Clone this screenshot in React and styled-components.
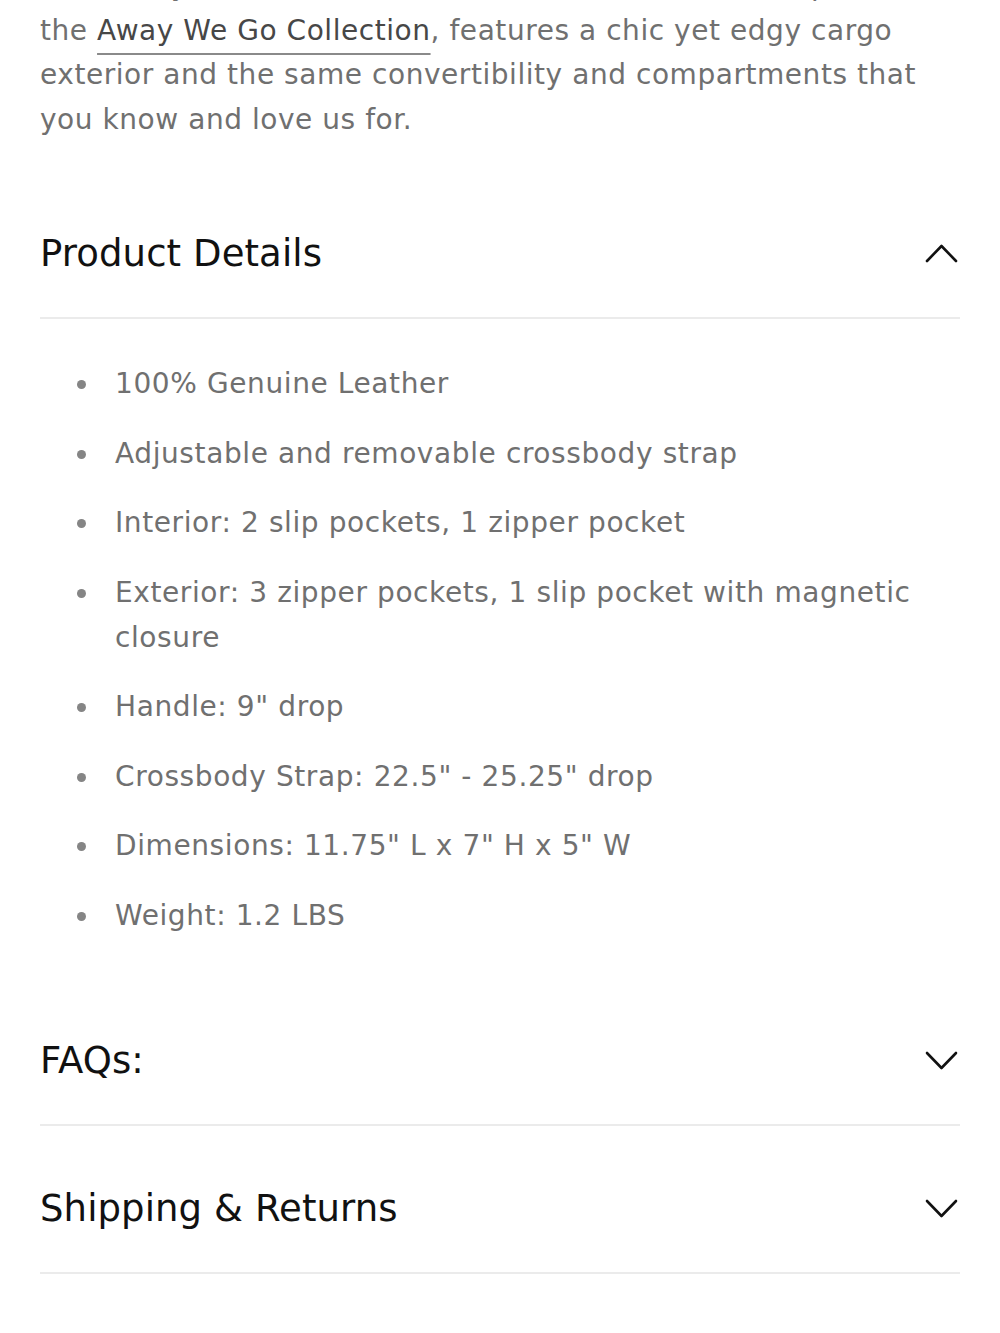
import React from "react";
import styled, { createGlobalStyle } from "styled-components";

const Global = createGlobalStyle`
  html, body { margin: 0; padding: 0; background: #fff; }
  body { font-family: "DejaVu Sans", "Liberation Sans", sans-serif; -webkit-font-smoothing: antialiased; }
`;

const Page = styled.div`
  padding: 0 40px;
  overflow: hidden;
`;

const Intro = styled.p`
  margin: -36px 0 0;
  font-size: 28px;
  font-weight: 400;
  line-height: 44.5px;
  letter-spacing: 0.55px;
  color: #707070;
  white-space: nowrap;
`;

const Link = styled.a`
  color: #474747;
  text-decoration: underline;
  text-decoration-color: #8a8a8a;
  text-decoration-thickness: 2px;
  text-underline-offset: 13px;
`;

const Item = styled.section`
  border-bottom: 2px solid #ebebeb;
  margin-top: ${(p) => p.$top || 0}px;
`;

const Header = styled.div`
  display: flex;
  align-items: center;
  justify-content: space-between;
  padding: 59px 2px 39px 0;
`;

const Title = styled.h2`
  margin: 0;
  font-size: 37px;
  font-weight: 400;
  line-height: 48px;
  letter-spacing: 0.1px;
  color: #111;
`;

const Chevron = styled.svg`
  display: block;
  margin-top: ${(p) => (p.$up ? -2 : 0)}px;
`;

const Panel = styled.div`
  padding: 42px 0 40px;
`;

const List = styled.ul`
  margin: 0;
  padding: 0 0 0 37px;
  list-style: none;
  display: flex;
  flex-direction: column;
  gap: 24.5px;
`;

const Bullet = styled.li`
  display: flex;
  align-items: flex-start;
  font-size: 28px;
  line-height: 45px;
  letter-spacing: 0.6px;
  color: #707070;
  padding-right: 40px;
  &::before {
    content: "";
    flex: 0 0 9px;
    height: 9px;
    margin: 19px 29px 0 0;
    border-radius: 50%;
    background: #858585;
  }
`;

const Toggle = ({ up }) => (
  <Chevron $up={up} width="33" height="20" viewBox="0 0 33 20" fill="none">
    <path
      d={up ? "M2 18 L16.5 3 L31 18" : "M2 2 L16.5 17 L31 2"}
      stroke="#111"
      strokeWidth="2.6"
      strokeLinecap="round"
      strokeLinejoin="round"
    />
  </Chevron>
);

const details = [
  "100% Genuine Leather",
  "Adjustable and removable crossbody strap",
  "Interior: 2 slip pockets, 1 zipper pocket",
  "Exterior: 3 zipper pockets, 1 slip pocket with magnetic closure",
  "Handle: 9\" drop",
  "Crossbody Strap: 22.5\" - 25.25\" drop",
  "Dimensions: 11.75\" L x 7\" H x 5\" W",
  "Weight: 1.2 LBS",
];

export default function App() {
  return (
    <Page>
      <Global />
      <Intro>
        The newly refined Duffel, crafted to be the ideal companion to
        <br />
        the <Link href="#">Away We Go Collection</Link>, features a chic yet edgy cargo
        <br />
        exterior and the same convertibility and compartments that
        <br />
        you know and love us for.
      </Intro>

      <Item $top={29}>
        <Header>
          <Title>Product Details</Title>
          <Toggle up />
        </Header>
      </Item>
      <Panel>
        <List>
          {details.map((d) => (
            <Bullet key={d}>{d}</Bullet>
          ))}
        </List>
      </Panel>

      <Item>
        <Header>
          <Title>FAQs:</Title>
          <Toggle />
        </Header>
      </Item>
      <Item>
        <Header>
          <Title>Shipping &amp; Returns</Title>
          <Toggle />
        </Header>
      </Item>
    </Page>
  );
}
